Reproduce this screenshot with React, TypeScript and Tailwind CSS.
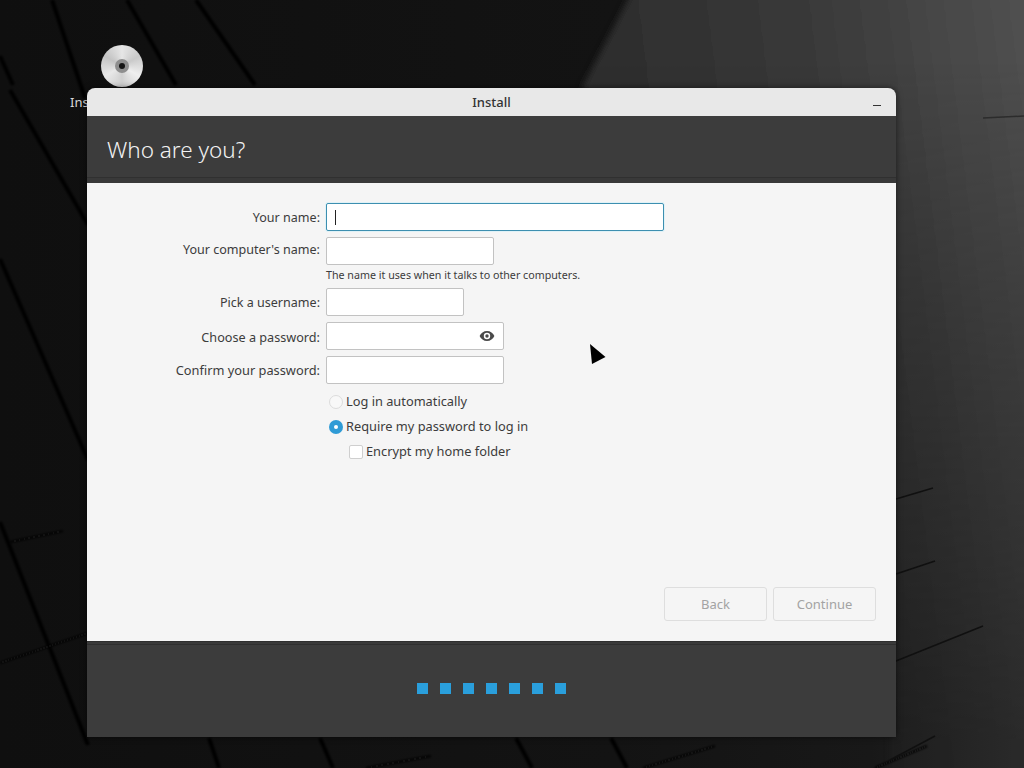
import React from "react";

const font = { fontFamily: '"Noto Sans", sans-serif' };

function Wallpaper() {
  return (
    <svg className="absolute inset-0" width="1024" height="768" viewBox="0 0 1024 768">
      <defs>
        <linearGradient id="bg" x1="0" y1="0" x2="1" y2="0">
          <stop offset="0" stopColor="#0f0f0f" />
          <stop offset="0.6" stopColor="#131313" />
          <stop offset="0.85" stopColor="#181818" />
          <stop offset="1" stopColor="#262626" />
        </linearGradient>
        <linearGradient id="top" gradientUnits="userSpaceOnUse" x1="620" y1="60" x2="1024" y2="10">
          <stop offset="0" stopColor="#2e2e2e" />
          <stop offset="0.5" stopColor="#3a3a3a" />
          <stop offset="1" stopColor="#505050" />
        </linearGradient>
        <linearGradient id="fade" gradientUnits="userSpaceOnUse" x1="0" y1="60" x2="0" y2="740">
          <stop offset="0" stopColor="#fff" />
          <stop offset="0.35" stopColor="#aaa" />
          <stop offset="1" stopColor="#222" />
        </linearGradient>
        <mask id="fadeMask">
          <rect width="1024" height="768" fill="url(#fade)" />
        </mask>
        <filter id="soft" x="-20%" y="-20%" width="140%" height="140%">
          <feGaussianBlur stdDeviation="3" />
        </filter>
        <filter id="line" filterUnits="userSpaceOnUse" x="0" y="0" width="1024" height="768">
          <feGaussianBlur stdDeviation="1.2" />
        </filter>
      </defs>
      <rect width="1024" height="768" fill="url(#bg)" />
      <polygon points="633,-10 1040,-10 1040,780 890,780 890,200 581,90" fill="url(#top)" filter="url(#soft)" mask="url(#fadeMask)" />
      <g stroke="#040404" strokeWidth="4" fill="none" filter="url(#line)">
        <path d="M52 0 L85 98" />
        <path d="M127 0 L176 85" />
        <path d="M196 0 L255 85" />
        <path d="M0 56 L13 85" />
        <path d="M10 90 L88 225" />
        <path d="M0 259 L88 460" />
        <path d="M0 522 L88 745" />
        <path d="M209 738 L219 768" />
        <path d="M320 738 L333 768" />
        <path d="M516 738 L532 768" />
        <path d="M611 738 L627 768" />
      </g>
      <g stroke="#080808" strokeWidth="2" fill="none" filter="url(#line)">
        <path d="M10 542 L63 531" />
        <path d="M0 663 L88 633" />
        <path d="M715 746 L643 768" />
        <path d="M431 756 L366 768" />
        <path d="M927 746 L875 768" />
      </g>
      <path d="M983 118 L1024 116" stroke="#2c2c2c" strokeWidth="1.5" fill="none" />
      <g stroke="#101010" strokeWidth="1.5" fill="none">
        <path d="M896 499 L933 488" />
        <path d="M896 574 L935 561" />
        <path d="M896 661 L983 626" />
        <path d="M890 760 L935 736" />
      </g>
    </svg>
  );
}

function Row({ label, width, focused, eye, mb, labelPos, labelSize }: { label: string; width: string; focused?: boolean; eye?: boolean; mb?: string; labelPos?: string; labelSize?: string }) {
  return (
    <div className={`flex items-center ${mb ?? ""}`}>
      <label className={`w-[234px] pr-[6px] text-right text-[#3c3c3c] ${labelSize ?? "text-[12.55px]"} ${labelPos ?? "pt-[2px]"}`}>{label}</label>
      <div className={`relative h-[28px] ${width} rounded-[2px] bg-white border ${focused ? "border-[#3d8fb0] shadow-[0_0_0_1px_#e0f2f7]" : "border-[#c2c2c2]"}`}>
        {focused && <div className="absolute left-[8px] top-[6px] h-[15px] w-px bg-[#222]" />}
        {eye && (
          <svg className="absolute right-[8px] top-[5px]" width="16" height="16" viewBox="0 0 16 16">
            <path d="M8 3C4.6 3 1.9 5.1.6 8c1.3 2.9 4 5 7.4 5s6.1-2.1 7.4-5C14.1 5.1 11.4 3 8 3zm0 8.2A3.2 3.2 0 1 1 8 4.8a3.2 3.2 0 0 1 0 6.4z" fill="#4a4a4a" />
            <circle cx="8" cy="8" r="1.7" fill="#4a4a4a" />
          </svg>
        )}
      </div>
    </div>
  );
}

export default function App() {
  return (
    <div className="relative w-[1024px] h-[768px] overflow-hidden bg-[#111]" style={font}>
      <Wallpaper />
      <div className="absolute left-[101px] top-[45px] w-[42px] h-[42px] rounded-full bg-[conic-gradient(#e6e6e6,#c9c9c9,#efefef,#cfcfcf,#e8e8e8,#c4c4c4,#e6e6e6)] flex items-center justify-center">
        <div className="w-[14px] h-[14px] rounded-full bg-[#8e8e8e] flex items-center justify-center">
          <div className="w-[6px] h-[6px] rounded-full bg-[#141414]" />
        </div>
      </div>
      <div className="absolute left-[70px] top-[94px] text-[13px] leading-[16px] text-[#d8d8d8]">Install</div>

      <div className="absolute left-[87px] top-[88px] w-[809px] h-[649px] flex flex-col overflow-hidden rounded-t-[8px] shadow-[0_0_6px_rgba(0,0,0,0.55)]">
        <div className="relative h-[28px] shrink-0 bg-[#e8e8e8] flex items-center justify-center pt-[1px] text-[13px] font-medium text-[#333]">
          Install
          <div className="absolute right-[15px] top-[17px] w-[8px] h-px bg-[#333]" />
        </div>
        <div className="h-[67px] shrink-0 bg-[#3c3c3c] flex flex-col">
          <div className="flex-1 flex items-center pl-[20px] pt-[6px] text-[22.5px] font-light text-[#f2f2f2]">Who are you?</div>
          <div className="h-[6px] border-t border-[#303030] bg-[#393939]" />
        </div>
        <div className="flex-1 bg-[#f5f5f5] flex flex-col">
          <div className="pt-[20px] pl-[5px]">
            <Row label="Your name:" width="w-[338px]" focused mb="mb-[6px]" />
            <Row label="Your computer's name:" width="w-[168px]" labelPos="pb-[2px]" />
            <div className="ml-[234px] text-[10.7px] leading-[14px] mt-[3px] mb-[6px] text-[#3c3c3c]">The name it uses when it talks to other computers.</div>
            <Row label="Pick a username:" width="w-[138px]" mb="mb-[6px]" />
            <Row label="Choose a password:" width="w-[178px]" eye mb="mb-[6px]" labelSize="text-[12.65px]" />
            <Row label="Confirm your password:" width="w-[178px]" labelSize="text-[12.8px]" />
            <div className="ml-[237px] mt-[5px] flex flex-col text-[12.8px] text-[#3c3c3c]">
              <div className="h-[25px] flex items-center gap-[3px]">
                <div className="w-[14px] h-[14px] rounded-full bg-[#f8f8f8] border border-[#dcdcdc]" />
                <span>Log in automatically</span>
              </div>
              <div className="h-[25px] flex items-center gap-[3px]">
                <div className="w-[14px] h-[14px] rounded-full bg-[#2f9bd6] flex items-center justify-center">
                  <div className="w-[4px] h-[4px] rounded-full bg-white" />
                </div>
                <span>Require my password to log in</span>
              </div>
              <div className="h-[25px] flex items-center gap-[3px] ml-[20px]">
                <div className="w-[14px] h-[14px] rounded-[2px] bg-white border border-[#cfcfcf]" />
                <span>Encrypt my home folder</span>
              </div>
            </div>
          </div>
          <div className="mt-auto mb-[20px] mr-[20px] flex justify-end gap-[6px]">
            <div className="w-[103px] h-[34px] pt-[2px] rounded-[3px] border border-[#dedede] flex items-center justify-center text-[13px] text-[#a3a3a3]">Back</div>
            <div className="w-[103px] h-[34px] pt-[2px] rounded-[3px] border border-[#dedede] flex items-center justify-center text-[13px] text-[#a3a3a3]">Continue</div>
          </div>
        </div>
        <div className="h-[96px] shrink-0 bg-[#3c3c3c] flex flex-col">
          <div className="h-[4px] border-t border-b border-[#2f2f2f] bg-[#3a3a3a]" />
          <div className="flex-1 flex items-center justify-center gap-[12px] pb-[5px]">
            {[0, 1, 2, 3, 4, 5, 6].map((i) => (
              <div key={i} className="w-[11px] h-[11px] bg-[#2a9fdc]" />
            ))}
          </div>
        </div>
      </div>

      <svg className="absolute left-[590px] top-[344px]" width="16" height="20" viewBox="0 0 16 20">
        <path d="M0 0 L15.5 13 L2 20 Z" fill="#000" />
      </svg>
    </div>
  );
}
